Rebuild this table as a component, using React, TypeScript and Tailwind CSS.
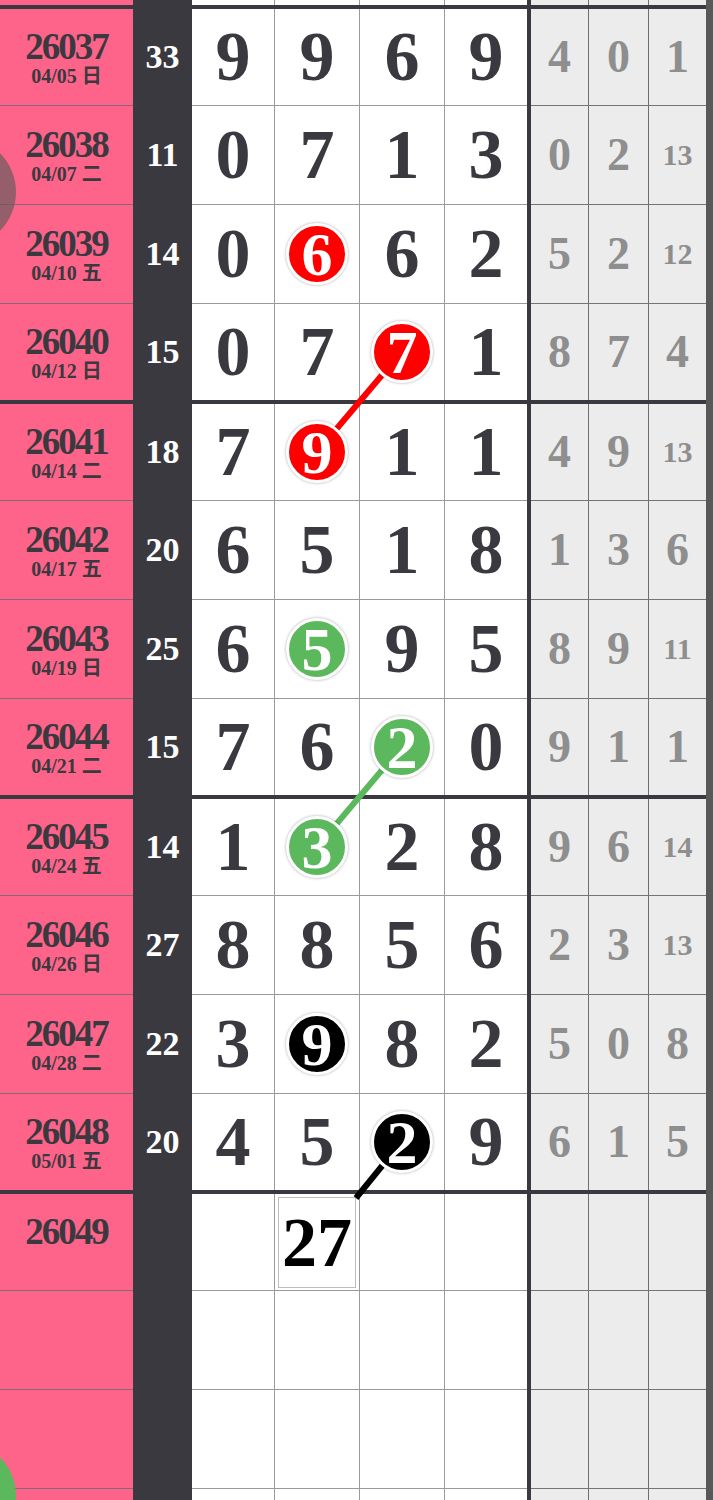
import React from "react";

type CircleColor = "red" | "green" | "black";
type Row = {
  id?: string;
  date?: string;
  sum?: number;
  d?: number[];
  g?: number[];
  circle?: { col: number; color: CircleColor };
  box?: { col: number; value: number };
};

const rows: Row[] = [
  { id: "26037", date: "04/05 日", sum: 33, d: [9, 9, 6, 9], g: [4, 0, 1] },
  { id: "26038", date: "04/07 二", sum: 11, d: [0, 7, 1, 3], g: [0, 2, 13] },
  { id: "26039", date: "04/10 五", sum: 14, d: [0, 6, 6, 2], g: [5, 2, 12], circle: { col: 1, color: "red" } },
  { id: "26040", date: "04/12 日", sum: 15, d: [0, 7, 7, 1], g: [8, 7, 4], circle: { col: 2, color: "red" } },
  { id: "26041", date: "04/14 二", sum: 18, d: [7, 9, 1, 1], g: [4, 9, 13], circle: { col: 1, color: "red" } },
  { id: "26042", date: "04/17 五", sum: 20, d: [6, 5, 1, 8], g: [1, 3, 6] },
  { id: "26043", date: "04/19 日", sum: 25, d: [6, 5, 9, 5], g: [8, 9, 11], circle: { col: 1, color: "green" } },
  { id: "26044", date: "04/21 二", sum: 15, d: [7, 6, 2, 0], g: [9, 1, 1], circle: { col: 2, color: "green" } },
  { id: "26045", date: "04/24 五", sum: 14, d: [1, 3, 2, 8], g: [9, 6, 14], circle: { col: 1, color: "green" } },
  { id: "26046", date: "04/26 日", sum: 27, d: [8, 8, 5, 6], g: [2, 3, 13] },
  { id: "26047", date: "04/28 二", sum: 22, d: [3, 9, 8, 2], g: [5, 0, 8], circle: { col: 1, color: "black" } },
  { id: "26048", date: "05/01 五", sum: 20, d: [4, 5, 2, 9], g: [6, 1, 5], circle: { col: 2, color: "black" } },
  { id: "26049", box: { col: 1, value: 27 } },
  {},
  {},
  {},
];

const whiteW = ["w-[83px] border-r border-[#9a9a9a]", "w-[85px] border-r border-[#9a9a9a]", "w-[85px] border-r border-[#9a9a9a]", "w-[82px]"];
const grayW = ["w-[58px] border-r border-[#6e6e6e]", "w-[60px] border-r border-[#6e6e6e]", "w-[57px]"];

const circleBg: Record<CircleColor, string> = {
  red: "bg-[#ff0000]",
  green: "bg-[#5cb85c]",
  black: "bg-[#000000]",
};

const serif = "font-['Liberation_Serif','Noto_Sans_CJK_SC',serif]";

function Circle({ value, color }: { value: number; color: CircleColor }) {
  return (
    <div
      className={`relative z-20 w-[62px] h-[62px] rounded-full border-[3px] border-white shadow-[0_0_3px_rgba(0,0,0,0.35)] flex items-center justify-center text-white text-[62px] leading-none font-bold ${circleBg[color]}`}
    >
      {value}
    </div>
  );
}

function ContentRow({ row, h }: { row: Row; h: number }) {
  const hc = h === 96 ? "h-[96px]" : h === 98 ? "h-[98px]" : "h-[5px]";
  return (
    <div className={`flex ${hc}`}>
      <div className="w-[133px] bg-[#fe6489] flex flex-col items-center justify-center text-[#3a3940] font-bold">
        {row.id !== undefined && (
          <>
            <div className="text-[37px] leading-[37px] tracking-[-2px]">{row.id}</div>
            <div className="mt-[1px] text-[20px] leading-[21px] h-[21px] whitespace-pre">{row.date ?? ""}</div>
          </>
        )}
      </div>
      <div className="w-[59px] bg-[#3a3940] flex items-center justify-center text-white text-[34px] leading-none font-bold">
        {row.sum ?? ""}
      </div>
      {whiteW.map((w, i) => (
        <div key={i} className={`${w} bg-white flex items-center justify-center`}>
          {row.circle && row.circle.col === i && row.d ? (
            <Circle value={row.d[i]} color={row.circle.color} />
          ) : row.box && row.box.col === i ? (
            <div className="w-full h-full p-[3px] pb-[2px]">
              <div className="w-full h-full border border-[#bdbdbd] flex items-center justify-center text-black text-[70px] leading-none font-bold">
                {row.box.value}
              </div>
            </div>
          ) : (
            <span className="text-[#3a3940] text-[70px] leading-none font-bold">{row.d ? row.d[i] : ""}</span>
          )}
        </div>
      ))}
      <div className="w-[4px] bg-[#3a3940]" />
      {grayW.map((w, i) => {
        const v = row.g ? row.g[i] : undefined;
        return (
          <div key={i} className={`${w} bg-[#ececec] flex items-center justify-center text-[#8e8e8e] font-bold leading-none`}>
            {v !== undefined && <span className={v >= 10 ? "text-[30px]" : "text-[46px]"}>{v}</span>}
          </div>
        );
      })}
      <div className="w-[7px] bg-[#585858]" />
    </div>
  );
}

function ThinLine() {
  return (
    <div className="flex h-[1px]">
      <div className="w-[133px] bg-[#806a74]" />
      <div className="w-[59px] bg-[#3a3940]" />
      <div className="w-[335px] bg-[#9a9a9a]" />
      <div className="w-[4px] bg-[#3a3940]" />
      <div className="w-[175px] bg-[#747474]" />
      <div className="w-[7px] bg-[#585858]" />
    </div>
  );
}

function ThickLine() {
  return (
    <div className="flex h-[4px]">
      <div className="w-[706px] bg-[#3a3940]" />
      <div className="w-[7px] bg-[#585858]" />
    </div>
  );
}

export default function App() {
  const heights = [96, 98, 98, 96];
  const groups = [0, 1, 2, 3];
  return (
    <div className={`relative w-[713px] h-[1500px] overflow-hidden bg-white ${serif}`}>
      <ContentRow row={{}} h={5} />
      {groups.map((g) => (
        <React.Fragment key={g}>
          <ThickLine />
          {heights.map((h, r) => {
            const idx = g * 4 + r;
            return (
              <React.Fragment key={idx}>
                <ContentRow row={rows[idx]} h={h} />
                {r < 3 && <ThinLine />}
              </React.Fragment>
            );
          })}
        </React.Fragment>
      ))}

      <svg className="absolute left-0 top-0 z-10 pointer-events-none" width="713" height="1500" viewBox="0 0 713 1500">
        <line x1="401.5" y1="352" x2="317" y2="452" stroke="#ff0000" strokeWidth="6" />
        <line x1="401.5" y1="747" x2="317" y2="847" stroke="#5cb85c" strokeWidth="6" />
        <line x1="401.5" y1="1142" x2="356" y2="1198" stroke="#000000" strokeWidth="6" />
      </svg>

      <div className="absolute z-30 left-[-94px] top-[137px] w-[110px] h-[110px] rounded-full bg-[rgba(90,90,90,0.65)]" />
      <div className="absolute z-30 left-[-94px] top-[1441px] w-[110px] h-[110px] rounded-full bg-[#5cb85c]" />
    </div>
  );
}
